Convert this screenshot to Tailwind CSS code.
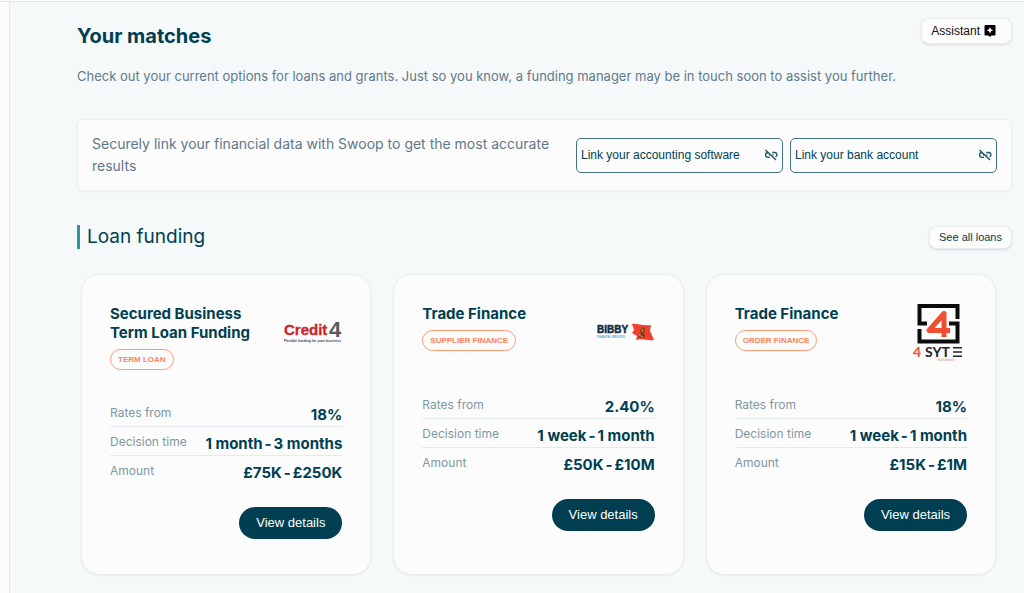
<!DOCTYPE html>
<html lang="en">
<head>
  <meta charset="UTF-8">
  <meta name="viewport" content="width=device-width, initial-scale=1.0">
  <title>Your matches</title>
  <script src="https://cdn.jsdelivr.net/npm/@tailwindcss/browser@4"></script>
</head>
<body class="min-h-screen flex flex-col bg-[#f5f9fa] text-[#003f51] font-['Inter','Liberation_Sans',sans-serif]">
  <div class="h-[2px] bg-[#fcfcfc] border-b border-[#e2e5e7]"></div>
  <div class="flex flex-1">
    <aside class="w-[10px] shrink-0 bg-[#fcfcfc] border-r border-[#e2e6e8]"></aside>

    <main class="flex-1 pl-[67px] pr-3 pt-4 pb-4">
      <header class="flex justify-between items-start">
        <h1 class="pt-1 text-xl leading-7 font-bold">Your matches</h1>
        <button class="flex items-center gap-1 h-[26px] pl-[9px] pr-[15px] rounded-lg bg-[#fcfcfc] border border-[#e8eef0] shadow-sm text-xs text-[#111] font-['Liberation_Sans',sans-serif]">
          Assistant
          <svg class="w-3 h-3" viewBox="0 0 12 12"><path d="M1.5 0h9a1 1 0 0 1 1 1v8.500a1 1 0 0 1-1 1H7.500L6 12 4.500 10.500h-3a1 1 0 0 1-1-1V1a1 1 0 0 1 1-1z" fill="#000"/><path d="M6 2l1 2.300 2.300 1-2.300 1-1 2.300-1-2.300-2.300-1 2.300-1z" fill="#fff"/></svg>
        </button>
      </header>
      <p class="mt-[14px] text-[13px] leading-6 text-[#61798a]">Check out your current options for loans and grants. Just so you know, a funding manager may be in touch soon to assist you further.</p>

      <section class="mt-[31px] flex items-center gap-5 h-[72px] px-[14px] rounded-md bg-[#fcfcfc] border border-[#edf1f3] shadow-xs">
        <p class="flex-1 text-sm leading-[22px] text-[#5f7889]">Securely link your financial data with Swoop to get the most accurate results</p>
        <div class="flex gap-[7px] text-xs font-['Liberation_Sans',sans-serif]">
          <button class="flex items-center justify-between w-[207px] h-[35px] px-1 rounded-[5px] border border-[#3f7181]">
            Link your accounting software
            <svg class="w-[14px] h-[14px]" viewBox="0 0 14 14" fill="none" stroke="#1c5363" stroke-width="1.300"><path d="M4 4.500a2.300 2.300 0 0 0 0 4.800h2M8.300 4.500H10.500a2.300 2.300 0 0 1 .8 4.500M4.800 6.900h1.800M8.300 6.900h1.200M1.500 2l10.500 10"/></svg>
          </button>
          <button class="flex items-center justify-between w-[207px] h-[35px] px-1 rounded-[5px] border border-[#3f7181]">
            Link your bank account
            <svg class="w-[14px] h-[14px]" viewBox="0 0 14 14" fill="none" stroke="#1c5363" stroke-width="1.300"><path d="M4 4.500a2.300 2.300 0 0 0 0 4.800h2M8.300 4.500H10.500a2.300 2.300 0 0 1 .8 4.500M4.800 6.900h1.800M8.300 6.900h1.200M1.500 2l10.500 10"/></svg>
          </button>
        </div>
      </section>

      <div class="mt-[34px] flex justify-between items-center">
        <h2 class="pl-[7px] border-l-3 border-[#2f94a0] text-[19px] leading-6">Loan funding</h2>
        <button class="h-[23px] px-[9px] rounded-lg bg-[#fcfcfc] border border-[#e8eef0] shadow-sm text-[11px] font-['Liberation_Sans',sans-serif]">See all loans</button>
      </div>

      <section class="mt-[25px] pl-1 pr-4 grid grid-cols-3 gap-[22px]">
        <!-- Credit4 -->
        <article class="px-7 pt-[29px] pb-[35px] rounded-[18px] bg-[#fcfcfc] border border-[#e6edf0] shadow-xs">
          <div class="flex justify-between items-start min-h-[58px]">
            <div>
              <h3 class="text-[15px] leading-[19px] font-bold">Secured Business<br>Term Loan Funding</h3>
              <span class="mt-[7px] flex items-center w-fit h-[21px] px-[7px] rounded-full border border-[#ff9b74] text-[8px] font-bold text-[#f9835a] font-['Liberation_Sans',sans-serif]">TERM LOAN</span>
            </div>
            <svg class="w-[58px] h-[58px] shrink-0" viewBox="0 0 58 58" font-family="Liberation Sans, sans-serif">
              <text x="0" y="31" font-size="15" font-weight="bold" fill="#c8262c" stroke="#c8262c" stroke-width=".3">Credit</text>
              <text x="45" y="33" font-size="22" font-weight="bold" fill="#58595b">4</text>
              <text x="0" y="38" font-size="3.500" font-weight="bold" fill="#444">Flexible funding for your business</text>
            </svg>
          </div>
          <dl class="mt-7">
            <div class="flex justify-between h-[29px] border-b border-[#e1ebf0]"><dt class="text-xs leading-[30px] text-[#7e98a4]">Rates from</dt><dd class="text-[15px] leading-[34px] font-bold">18%</dd></div>
            <div class="flex justify-between h-[29px] border-b border-[#e1ebf0]"><dt class="text-xs leading-[30px] text-[#7e98a4]">Decision time</dt><dd class="flex gap-[2px] text-[15px] leading-[34px] font-bold"><span>1 month</span><span>-</span><span>3 months</span></dd></div>
            <div class="flex justify-between h-[29px]"><dt class="text-xs leading-[30px] text-[#7e98a4]">Amount</dt><dd class="flex gap-[2px] text-[15px] leading-[34px] font-bold"><span>£75K</span><span>-</span><span>£250K</span></dd></div>
          </dl>
          <div class="mt-[22px] flex justify-end">
            <button class="w-[103px] h-8 rounded-full bg-[#003f51] text-white text-[13px] font-['Liberation_Sans',sans-serif]">View details</button>
          </div>
        </article>

        <!-- Bibby -->
        <article class="px-7 pt-[29px] pb-[35px] rounded-[18px] bg-[#fcfcfc] border border-[#e6edf0] shadow-xs">
          <div class="flex justify-between items-start min-h-[58px]">
            <div>
              <h3 class="text-[15px] leading-[19px] font-bold">Trade Finance</h3>
              <span class="mt-[7px] flex items-center w-fit h-[21px] px-[7px] rounded-full border border-[#ff9b74] text-[8px] font-bold text-[#f9835a] font-['Liberation_Sans',sans-serif]">SUPPLIER FINANCE</span>
            </div>
            <svg class="w-[58px] h-[58px] shrink-0" viewBox="0 0 58 58" font-family="Liberation Sans, sans-serif">
              <text x="0" y="29" font-size="10" font-weight="bold" fill="#12303f" stroke="#12303f" stroke-width=".5">BIBBY</text>
              <text x="0" y="34" font-size="2.600" font-weight="bold" fill="#5ba3c4">FINANCIAL SERVICES</text>
              <path d="M35 20c5-1 9 2 19 1l-1 6 4 9c-8 1-12-2-18 0l1-4-5-3 2-3z" fill="#ef4130"/>
              <path d="M46 23l2 2-1 4 1 4-5 1-2-2 3-2-1-3z" fill="#7b3a1d"/><path d="M42 31l4 2M46 25l-1 3" stroke="#d9a441" fill="none"/>
            </svg>
          </div>
          <dl class="mt-7">
            <div class="flex justify-between h-[29px] border-b border-[#e1ebf0]"><dt class="text-xs leading-[30px] text-[#7e98a4]">Rates from</dt><dd class="text-[15px] leading-[34px] font-bold">2.40%</dd></div>
            <div class="flex justify-between h-[29px] border-b border-[#e1ebf0]"><dt class="text-xs leading-[30px] text-[#7e98a4]">Decision time</dt><dd class="flex gap-[2px] text-[15px] leading-[34px] font-bold"><span>1 week</span><span>-</span><span>1 month</span></dd></div>
            <div class="flex justify-between h-[29px]"><dt class="text-xs leading-[30px] text-[#7e98a4]">Amount</dt><dd class="flex gap-[2px] text-[15px] leading-[34px] font-bold"><span>£50K</span><span>-</span><span>£10M</span></dd></div>
          </dl>
          <div class="mt-[22px] flex justify-end">
            <button class="w-[103px] h-8 rounded-full bg-[#003f51] text-white text-[13px] font-['Liberation_Sans',sans-serif]">View details</button>
          </div>
        </article>

        <!-- 4Syte -->
        <article class="px-7 pt-[29px] pb-[35px] rounded-[18px] bg-[#fcfcfc] border border-[#e6edf0] shadow-xs">
          <div class="flex justify-between items-start min-h-[58px]">
            <div>
              <h3 class="text-[15px] leading-[19px] font-bold">Trade Finance</h3>
              <span class="mt-[7px] flex items-center w-fit h-[21px] px-[7px] rounded-full border border-[#ff9b74] text-[8px] font-bold text-[#f9835a] font-['Liberation_Sans',sans-serif]">ORDER FINANCE</span>
            </div>
            <svg class="w-[58px] h-[58px] shrink-0" viewBox="0 0 58 58" font-family="Lato, sans-serif">
              <path d="M48.500 15V2H10.500V19.500H18M10.500 25V37.500H48.500V19.500H40" fill="none" stroke="#0c0c0c" stroke-width="4"/>
              <path d="M35 33V9.500L20 26.500h21" fill="none" stroke="#f04e30" stroke-width="5" stroke-linejoin="round"/>
              <text x="4" y="53" font-size="14" font-weight="bold" fill="#f04e30">4</text>
              <text x="16" y="53" font-size="14" font-weight="bold" fill="#222">SYT</text>
              <path d="M44 43.800h9M44 48h9M44 52.200h9" stroke="#222" stroke-width="1.600"/>
              <text x="29" y="57" font-size="4" font-weight="bold" fill="#e0a890">Solutions</text>
            </svg>
          </div>
          <dl class="mt-7">
            <div class="flex justify-between h-[29px] border-b border-[#e1ebf0]"><dt class="text-xs leading-[30px] text-[#7e98a4]">Rates from</dt><dd class="text-[15px] leading-[34px] font-bold">18%</dd></div>
            <div class="flex justify-between h-[29px] border-b border-[#e1ebf0]"><dt class="text-xs leading-[30px] text-[#7e98a4]">Decision time</dt><dd class="flex gap-[2px] text-[15px] leading-[34px] font-bold"><span>1 week</span><span>-</span><span>1 month</span></dd></div>
            <div class="flex justify-between h-[29px]"><dt class="text-xs leading-[30px] text-[#7e98a4]">Amount</dt><dd class="flex gap-[2px] text-[15px] leading-[34px] font-bold"><span>£15K</span><span>-</span><span>£1M</span></dd></div>
          </dl>
          <div class="mt-[22px] flex justify-end">
            <button class="w-[103px] h-8 rounded-full bg-[#003f51] text-white text-[13px] font-['Liberation_Sans',sans-serif]">View details</button>
          </div>
        </article>
      </section>
    </main>
  </div>
</body>
</html>
